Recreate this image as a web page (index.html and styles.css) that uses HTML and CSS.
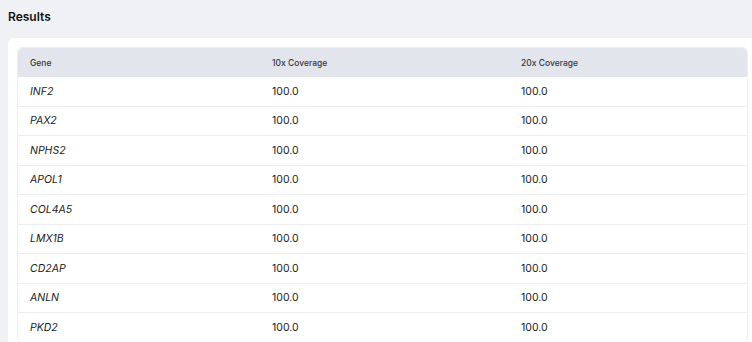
FILE: index.html
```html
<!DOCTYPE html>
<html lang="en">
<head>
  <meta charset="UTF-8">
  <meta name="viewport" content="width=device-width, initial-scale=1.0">
  <title>Results</title>
  <link rel="stylesheet" href="styles.css">
</head>
<body>

<h2 class="title">Results</h2>

<section class="card">
  <table class="results-table">
    <thead>
      <tr>
        <th>Gene</th>
        <th>10x Coverage</th>
        <th>20x Coverage</th>
      </tr>
    </thead>
    <tbody>
      <tr><td class="gene">INF2</td><td>100.0</td><td>100.0</td></tr>
      <tr><td class="gene">PAX2</td><td>100.0</td><td>100.0</td></tr>
      <tr><td class="gene">NPHS2</td><td>100.0</td><td>100.0</td></tr>
      <tr><td class="gene">APOL1</td><td>100.0</td><td>100.0</td></tr>
      <tr><td class="gene">COL4A5</td><td>100.0</td><td>100.0</td></tr>
      <tr><td class="gene">LMX1B</td><td>100.0</td><td>100.0</td></tr>
      <tr><td class="gene">CD2AP</td><td>100.0</td><td>100.0</td></tr>
      <tr><td class="gene">ANLN</td><td>100.0</td><td>100.0</td></tr>
      <tr><td class="gene">PKD2</td><td>100.0</td><td>100.0</td></tr>
    </tbody>
  </table>
</section>

</body>
</html>
```

FILE: styles.css
```css
body {
  font-family: Inter, "Noto Sans", sans-serif;
  margin: 0;
  padding: 0 0 0 8px;
  background: #f0f1f5;
  color: #1f2328;
  overflow: hidden;
  height: 100vh;
}
.title {
  font-size: 12px;
  font-weight: 600;
  margin: 0;
  height: 38px;
  line-height: 34px;
  color: #111;
}
.card {
  background: white;
  border-radius: 6px;
  padding: 9px;
  width: 731px;
}
.results-table {
  width: 100%;
  border-collapse: separate;
  border-spacing: 0;
  table-layout: fixed;
  border: 1px solid #eceef2;
  border-radius: 5px;
  font-size: 10.5px;
}
.results-table th {
  background: #e2e5ec;
  font-weight: 500;
  font-size: 8.5px;
  color: #333842;
  text-align: left;
  height: 29px;
  padding: 0 12px;
}
.results-table th:first-child {
  width: 218px;
  border-top-left-radius: 5px;
}
.results-table th:nth-child(2) {
  width: 225px;
}
.results-table th:last-child {
  border-top-right-radius: 5px;
}
.results-table td {
  height: 28.5px;
  padding: 0 12px;
  border-top: 1px solid #eceef2;
  color: #222;
}
.results-table tbody tr:first-child td {
  border-top: none;
}
.results-table td.gene {
  font-style: italic;
}
```
